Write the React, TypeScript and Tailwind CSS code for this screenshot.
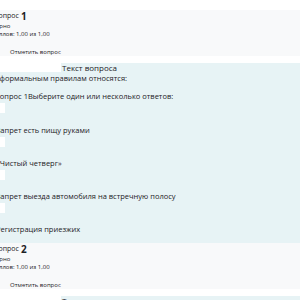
const FONT = { fontFamily: '"Open Sans", "Noto Sans", sans-serif' };

const answers = [
  'Запрет есть пищу руками',
  '«Чистый четверг»',
  'Запрет выезда автомобиля на встречную полосу',
  'Регистрация приезжих',
];

function QuestionInfo({ num }: { num: number }) {
  return (
    <div className="h-[46px] bg-[#f8f9fa] pt-[1px] text-[#1d2125]">
      <div className="ml-[-6px] flex h-[10px] items-end leading-[10px]">
        <span className="text-[7px]">Вопрос</span>
        <span className="ml-[2px] text-[10px] font-bold">{num}</span>
      </div>
      <div className="ml-[-8px] mt-[1px] h-[8px] text-[6px] leading-[8px]">Верно</div>
      <div className="ml-[-8px] h-[8px] text-[6px] leading-[8px]">Баллов: 1,00 из 1,00</div>
      <div className="ml-[10px] mt-[10px] h-[8px] text-[6px] leading-[8px]">Отметить вопрос</div>
    </div>
  );
}

function QuestionHeading() {
  return (
    <div className="flex h-[9px] bg-[#e7f3f5]">
      <div className="w-[61px] bg-white" />
      <div className="pl-[1px] text-[8px] leading-[9px] text-[#1d2125]">Текст вопроса</div>
    </div>
  );
}

export default function App() {
  return (
    <div className="h-[300px] w-[300px] overflow-hidden bg-white" style={FONT}>
      <div className="h-[10px]" />
      <QuestionInfo num={1} />
      <div className="h-[7px]" />
      <QuestionHeading />
      <div className="h-[171px] bg-[#e7f3f5] text-[7.5px] text-[#1d2125]">
        <div className="ml-[-7px] h-[12px] leading-[12px]">К формальным правилам относятся:</div>
        <div className="ml-[-5px] mt-[6px] h-[12px] leading-[12px]">
          Вопрос 1Выберите один или несколько ответов:
        </div>
        {answers.map((a, i) => (
          <div key={a}>
            <div className="ml-[-8px] mt-[1px] h-[10px] w-[13px] bg-white" />
            <div
              className={
                i === 0
                  ? 'ml-[-4px] mt-[11px] h-[12px] whitespace-nowrap leading-[12px]'
                  : 'ml-[-4px] mt-[10px] h-[12px] whitespace-nowrap leading-[12px]'
              }
            >
              {a}
            </div>
          </div>
        ))}
      </div>
      <QuestionInfo num={2} />
      <div className="h-[7px]" />
      <QuestionHeading />
    </div>
  );
}
